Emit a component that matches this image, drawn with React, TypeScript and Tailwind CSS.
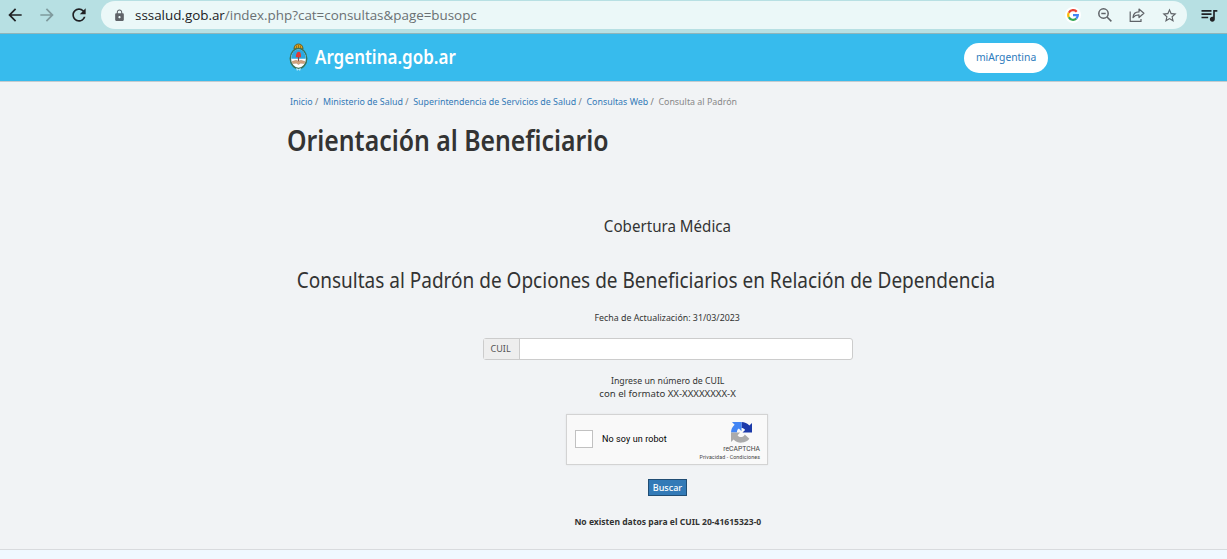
import React from "react";
import { MdArrowBack, MdArrowForward, MdRefresh, MdLock, MdStarBorder, MdQueueMusic } from "react-icons/md";

function GoogleIcon() {
  return (
    <svg className="size-3" viewBox="0 0 24 24" fill="none" strokeWidth="4.500">
      <path d="M19.500 5.500A9.700 9.700 0 0 0 3.600 7.500" stroke="#ea4335" />
      <path d="M3.600 7.500a9.700 9.700 0 0 0 0 9" stroke="#fbbc05" />
      <path d="M3.600 16.500A9.700 9.700 0 0 0 18.500 19.300" stroke="#34a853" />
      <path d="M18.500 19.300a9.700 9.700 0 0 0 3.200-7.100H12" stroke="#4285f4" />
    </svg>
  );
}

function ZoomOutIcon() {
  return (
    <svg className="size-4" viewBox="0 0 16 16" fill="none" stroke="#5f6368" strokeWidth="1.500">
      <circle cx="6.500" cy="6.500" r="4.700" />
      <path d="M4.300 6.500h4.400M10 10l4.400 4.400" />
    </svg>
  );
}

function ShareIcon() {
  return (
    <svg className="size-4" viewBox="0 0 16 16" fill="none" stroke="#5f6368" strokeWidth="1.200">
      <path d="M1.200 4.500v9.800h10.800v-2.300" />
      <path d="M4 10.500c.3-3.700 2.300-5.500 6-5.600V2l4.900 4.300L10 10.500V7.900c-2.700 0-4.500.8-6 2.600z" strokeLinejoin="round" />
    </svg>
  );
}

function CoatOfArms() {
  return (
    <svg className="h-[29px] w-[19px] shrink-0" viewBox="0 0 19 29">
      <path d="M5 6C5 2.500 7 1 9.500 1S14 2.500 14 6z" fill="#d9a521" stroke="#5e5622" strokeWidth=".9" />
      <path d="M7.500 2.500V6M9.500 2V6M11.500 2.500V6" stroke="#7c5a16" strokeWidth=".7" />
      <ellipse cx="9.500" cy="15.500" rx="8.200" ry="10" fill="#fff" stroke="#3a7359" strokeWidth="1.500" />
      <path d="M2.200 15.800C2.200 10 5.500 6.300 9.500 6.300s7.300 3.700 7.300 9.500z" fill="#2ba8e0" />
      <path d="M9.500 12v7" stroke="#7a4a45" strokeWidth="1.200" />
      <path d="M6.800 14.200c0-3.500 1.200-5.500 3-5.500s2.400 2 2.200 5.500z" fill="#e03a35" />
      <path d="M3 18.500l4-1.200 2.500 1 2.500-1 4 1.200-.8 2-3.700-.3-2 1.300-2-1.300-3.700.3z" fill="#d2a27d" stroke="#a57855" strokeWidth=".4" />
      <path d="M7 25l2.500 1 2.500-1-1 3-1.500-1.500L8 28z" fill="#b9e8fa" />
    </svg>
  );
}

function RecaptchaLogo() {
  return (
    <svg className="h-[21px] w-[21px]" viewBox="0 0 64 64">
      <path d="M64 32V3l-8 8A32 32 0 0 0 32 0v18c4 0 8 2 11 6l-8 8z" fill="#1c3aa9" />
      <path d="M32 0H3l8 8A32 32 0 0 0 0 32h18c0-7 3-11 6-12l8 8z" fill="#4285f4" />
      <path d="M0 32v29l8-8a32 32 0 0 0 48-2L42 38c-5 10-17 10-22 2l8-8z" fill="#ababab" />
    </svg>
  );
}

function BrowserBar() {
  return (
    <div className="flex h-[34px] items-start border-b border-[#8fb5ba] bg-[#b7e0e3]">
      <div className="flex h-[30px] w-[101px] shrink-0 items-center gap-[12px] pl-[5px] text-[20px] text-[#202124]">
        <MdArrowBack />
        <MdArrowForward className="text-[#7f9a9d]" />
        <MdRefresh />
      </div>
      <div className="mt-px flex h-[28px] w-[1086px] shrink-0 items-center rounded-full bg-[#ebf8f8] pl-[12px] pr-[10px]">
        <MdLock className="text-[13px] text-[#5f6368]" />
        <span className="ml-[9px] grow pb-px font-['Open_Sans',sans-serif] text-[13.4px] leading-5 text-[#6a7073]">
          <span className="text-[#202124]">sssalud.gob.ar</span>/index.php?cat=consultas&amp;page=busopc
        </span>
        <div className="flex items-center gap-4">
          <span className="flex size-4 items-center justify-center rounded-full bg-white"><GoogleIcon /></span>
          <ZoomOutIcon />
          <ShareIcon />
          <MdStarBorder className="-mr-px text-[17px] text-[#5f6368]" />
        </div>
      </div>
      <MdQueueMusic className="ml-[12px] mt-[5px] text-[20px] text-[#202124]" />
    </div>
  );
}

const crumbs = ["Inicio", "Ministerio de Salud", "Superintendencia de Servicios de Salud", "Consultas Web"];

export default function App() {
  return (
    <div className="flex h-[559px] w-[1227px] flex-col overflow-hidden bg-[#f1f3f5] font-['Noto_Sans',sans-serif] text-[9.5px] text-[#333]">
      <BrowserBar />
      <header className="flex h-[48px] shrink-0 items-center border-b border-[#c4cbcf] bg-[#37bbed] pl-[289px] pr-[179px]">
        <CoatOfArms />
        <span className="ml-[7px] grow whitespace-nowrap text-[19px] font-semibold text-white">
          <span className="inline-block origin-left scale-x-[.893]">Argentina.gob.ar</span>
        </span>
        <button className="h-[30px] w-[84px] rounded-full bg-white text-[11px] text-[#2e7bbd]">
          <span className="-mx-1 inline-block scale-x-[.94]">miArgentina</span>
        </button>
      </header>

      <main className="flex grow flex-col">
        <nav className="mt-[13px] ml-[290px] flex h-[14px] w-[600px] origin-left scale-x-[.933] items-center leading-[14px] whitespace-nowrap">
          {crumbs.map((c) => (
            <span key={c} className="mr-[5px] text-[#777]">
              <a className="text-[#337ab7]">{c}</a> /
            </span>
          ))}
          <span className="text-[#888]">Consulta al Padrón</span>
        </nav>
        <h1 className="mt-[11px] h-[41px] pl-[287px] text-[29px] leading-[39px] font-semibold whitespace-nowrap">
          <span className="inline-block origin-left scale-x-[.855]">Orientación al Beneficiario</span>
        </h1>
        <section className="ml-[288px] flex w-[759px] flex-col items-center whitespace-nowrap">
          <h3 className="mt-[53px] scale-x-[.89] text-[17px] leading-[24px]">Cobertura Médica</h3>
          <h2 className="-ml-[43px] mt-[27px] scale-x-[.905] text-[21px] leading-[30px]">Consultas al Padrón de Opciones de Beneficiarios en Relación de Dependencia</h2>
          <p className="mt-[16px] scale-x-[.93] leading-[14px]">Fecha de Actualización: 31/03/2023</p>
          <div className="mt-[13px] flex h-[22px] w-[370px] rounded-[3px] border border-[#ccc] bg-white">
            <label className="flex w-[36px] items-center justify-center border-r border-[#ccc] bg-[#eee] text-[#555]">
              <span className="inline-block scale-x-95">CUIL</span>
            </label>
            <input className="min-w-0 grow bg-transparent px-2 outline-none" />
          </div>
          <p className="mt-[14px] flex flex-col items-center leading-[13px]">
            <span className="scale-x-[.92]">Ingrese un número de CUIL</span>
            <span className="scale-x-[1.01]">con el formato XX-XXXXXXXX-X</span>
          </p>
          <div className="-ml-px mt-[14px] flex h-[51px] w-[202px] items-center border border-[#d3d3d3] bg-[#f9f9f9] pl-[8px] font-[Roboto,sans-serif] text-black shadow-[0_0_2px_#0001]">
            <span className="mb-px size-[18px] border border-[#c1c1c1] bg-white" />
            <span className="ml-[9px] grow pt-px text-[9px] tracking-[.1px]">No soy un robot</span>
            <div className="mr-[7px] flex w-[60px] flex-col items-end pt-[3px] whitespace-nowrap text-[#444]">
              <span className="mr-[8px]"><RecaptchaLogo /></span>
              <span className="mt-[2px] text-[6.800px] leading-[9px]">reCAPTCHA</span>
              <span className="text-[5.300px] leading-[7px] tracking-[.1px]">Privacidad - Condiciones</span>
            </div>
          </div>
          <button className="mt-[14px] h-[17px] w-[39px] border border-[#204d74] bg-[#337ab7] leading-[14px] text-white">
            <span className="-mx-1 inline-block scale-x-[.95] font-medium">Buscar</span>
          </button>
          <p className="mt-[19px] scale-x-[.9] leading-[14px] font-bold">No existen datos para el CUIL 20-41615323-0</p>
        </section>
      </main>
      <footer className="h-[10px] shrink-0 border-t border-[#d8dadd] bg-[#f0f8ff]" />
    </div>
  );
}
